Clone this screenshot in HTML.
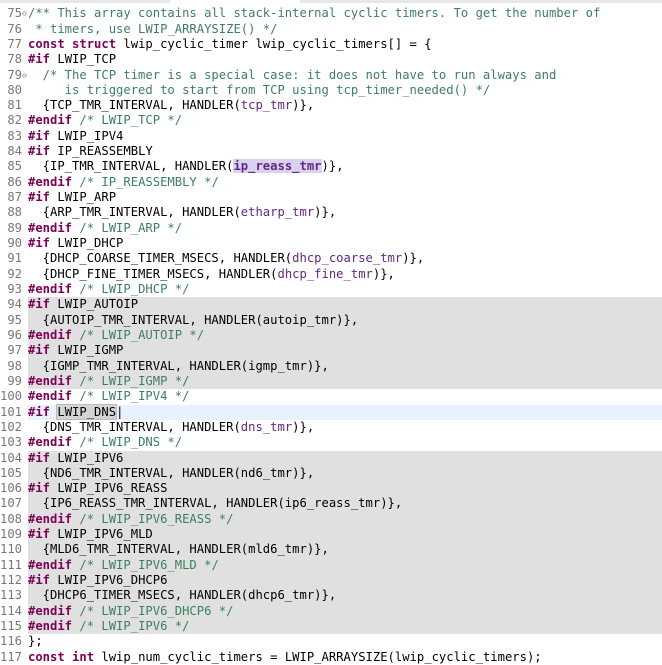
<!DOCTYPE html>
<html><head><meta charset="utf-8"><style>
html,body{margin:0;padding:0;background:#fff;width:662px;height:656px;overflow:hidden}
#tabs{position:absolute;left:0;top:0;width:662px;height:3px;background:#e8e8e8}
#tabs .t{position:absolute;left:170px;top:0;width:130px;height:3px;background:#fff}
.ln{position:absolute;left:0;width:22px;text-align:right;color:#787878}
.c{position:absolute;left:28px;white-space:pre}
.row{position:absolute;left:0;width:662px;height:15.32px;font:12.2px/15.32px "DejaVu Sans Mono","Liberation Mono",monospace;color:#000}
.g{position:absolute;left:28px;right:0;background:#e0e0e0}
.b{position:absolute;left:28px;right:0;background:#e8f2fe}
.k{color:#7f0055;font-weight:bold}
.m{color:#3f7f5f}
.f{color:#642880}
.fold{position:absolute;left:22px;color:#888;font-size:8px}
.hl{background:#d8d2f0;font-weight:bold;color:#642880}
.sel{background:#d4d4d4;box-shadow:0 0 0 1px #bdbdbd}
#wrap{position:absolute;left:0;top:0.8px;width:662px;height:656px}
</style></head><body>
<div id="tabs"><div class="t"></div></div>
<div id="wrap">
<div class="g" style="top:296.6px;height:91.9px"></div>
<div class="b" style="top:403.8px;height:15.32px"></div>
<div class="g" style="top:449.8px;height:183.8px"></div>
<div class="row" style="top:5.5px"><span class="ln">75</span><span class="fold">⊖</span><span class="c m">/** This array contains all stack-internal cyclic timers. To get the number of</span></div>
<div class="row" style="top:20.8px"><span class="ln">76</span><span class="c m"> * timers, use LWIP_ARRAYSIZE() */</span></div>
<div class="row" style="top:36.1px"><span class="ln">77</span><span class="c"><span class="k">const struct</span> lwip_cyclic_timer lwip_cyclic_timers[] = {</span></div>
<div class="row" style="top:51.5px"><span class="ln">78</span><span class="c"><span class="k">#if</span> LWIP_TCP</span></div>
<div class="row" style="top:66.8px"><span class="ln">79</span><span class="fold">⊖</span><span class="c m">  /* The TCP timer is a special case: it does not have to run always and</span></div>
<div class="row" style="top:82.1px"><span class="ln">80</span><span class="c m">     is triggered to start from TCP using tcp_timer_needed() */</span></div>
<div class="row" style="top:97.4px"><span class="ln">81</span><span class="c">  {TCP_TMR_INTERVAL, HANDLER(<span class="f">tcp_tmr</span>)},</span></div>
<div class="row" style="top:112.7px"><span class="ln">82</span><span class="c"><span class="k">#endif</span> <span class="m">/* LWIP_TCP */</span></span></div>
<div class="row" style="top:128.1px"><span class="ln">83</span><span class="c"><span class="k">#if</span> LWIP_IPV4</span></div>
<div class="row" style="top:143.4px"><span class="ln">84</span><span class="c"><span class="k">#if</span> IP_REASSEMBLY</span></div>
<div class="row" style="top:158.7px"><span class="ln">85</span><span class="c">  {IP_TMR_INTERVAL, HANDLER(<span class="hl">ip_reass_tmr</span>)},</span></div>
<div class="row" style="top:174.0px"><span class="ln">86</span><span class="c"><span class="k">#endif</span> <span class="m">/* IP_REASSEMBLY */</span></span></div>
<div class="row" style="top:189.3px"><span class="ln">87</span><span class="c"><span class="k">#if</span> LWIP_ARP</span></div>
<div class="row" style="top:204.7px"><span class="ln">88</span><span class="c">  {ARP_TMR_INTERVAL, HANDLER(<span class="f">etharp_tmr</span>)},</span></div>
<div class="row" style="top:220.0px"><span class="ln">89</span><span class="c"><span class="k">#endif</span> <span class="m">/* LWIP_ARP */</span></span></div>
<div class="row" style="top:235.3px"><span class="ln">90</span><span class="c"><span class="k">#if</span> LWIP_DHCP</span></div>
<div class="row" style="top:250.6px"><span class="ln">91</span><span class="c">  {DHCP_COARSE_TIMER_MSECS, HANDLER(<span class="f">dhcp_coarse_tmr</span>)},</span></div>
<div class="row" style="top:265.9px"><span class="ln">92</span><span class="c">  {DHCP_FINE_TIMER_MSECS, HANDLER(<span class="f">dhcp_fine_tmr</span>)},</span></div>
<div class="row" style="top:281.3px"><span class="ln">93</span><span class="c"><span class="k">#endif</span> <span class="m">/* LWIP_DHCP */</span></span></div>
<div class="row" style="top:296.6px"><span class="ln">94</span><span class="c"><span class="k">#if</span> LWIP_AUTOIP</span></div>
<div class="row" style="top:311.9px"><span class="ln">95</span><span class="c">  {AUTOIP_TMR_INTERVAL, HANDLER(autoip_tmr)},</span></div>
<div class="row" style="top:327.2px"><span class="ln">96</span><span class="c"><span class="k">#endif</span> <span class="m">/* LWIP_AUTOIP */</span></span></div>
<div class="row" style="top:342.5px"><span class="ln">97</span><span class="c"><span class="k">#if</span> LWIP_IGMP</span></div>
<div class="row" style="top:357.9px"><span class="ln">98</span><span class="c">  {IGMP_TMR_INTERVAL, HANDLER(igmp_tmr)},</span></div>
<div class="row" style="top:373.2px"><span class="ln">99</span><span class="c"><span class="k">#endif</span> <span class="m">/* LWIP_IGMP */</span></span></div>
<div class="row" style="top:388.5px"><span class="ln">100</span><span class="c"><span class="k">#endif</span> <span class="m">/* LWIP_IPV4 */</span></span></div>
<div class="row" style="top:403.8px"><span class="ln">101</span><span class="c"><span class="k">#if</span> <span class="sel">LWIP_DNS</span>|</span></div>
<div class="row" style="top:419.1px"><span class="ln">102</span><span class="c">  {DNS_TMR_INTERVAL, HANDLER(<span class="f">dns_tmr</span>)},</span></div>
<div class="row" style="top:434.5px"><span class="ln">103</span><span class="c"><span class="k">#endif</span> <span class="m">/* LWIP_DNS */</span></span></div>
<div class="row" style="top:449.8px"><span class="ln">104</span><span class="c"><span class="k">#if</span> LWIP_IPV6</span></div>
<div class="row" style="top:465.1px"><span class="ln">105</span><span class="c">  {ND6_TMR_INTERVAL, HANDLER(nd6_tmr)},</span></div>
<div class="row" style="top:480.4px"><span class="ln">106</span><span class="c"><span class="k">#if</span> LWIP_IPV6_REASS</span></div>
<div class="row" style="top:495.7px"><span class="ln">107</span><span class="c">  {IP6_REASS_TMR_INTERVAL, HANDLER(ip6_reass_tmr)},</span></div>
<div class="row" style="top:511.1px"><span class="ln">108</span><span class="c"><span class="k">#endif</span> <span class="m">/* LWIP_IPV6_REASS */</span></span></div>
<div class="row" style="top:526.4px"><span class="ln">109</span><span class="c"><span class="k">#if</span> LWIP_IPV6_MLD</span></div>
<div class="row" style="top:541.7px"><span class="ln">110</span><span class="c">  {MLD6_TMR_INTERVAL, HANDLER(mld6_tmr)},</span></div>
<div class="row" style="top:557.0px"><span class="ln">111</span><span class="c"><span class="k">#endif</span> <span class="m">/* LWIP_IPV6_MLD */</span></span></div>
<div class="row" style="top:572.3px"><span class="ln">112</span><span class="c"><span class="k">#if</span> LWIP_IPV6_DHCP6</span></div>
<div class="row" style="top:587.7px"><span class="ln">113</span><span class="c">  {DHCP6_TIMER_MSECS, HANDLER(dhcp6_tmr)},</span></div>
<div class="row" style="top:603.0px"><span class="ln">114</span><span class="c"><span class="k">#endif</span> <span class="m">/* LWIP_IPV6_DHCP6 */</span></span></div>
<div class="row" style="top:618.3px"><span class="ln">115</span><span class="c"><span class="k">#endif</span> <span class="m">/* LWIP_IPV6 */</span></span></div>
<div class="row" style="top:633.6px"><span class="ln">116</span><span class="c">};</span></div>
<div class="row" style="top:648.9px"><span class="ln">117</span><span class="c"><span class="k">const int</span> lwip_num_cyclic_timers = LWIP_ARRAYSIZE(lwip_cyclic_timers);</span></div>
</div>
</body></html>
